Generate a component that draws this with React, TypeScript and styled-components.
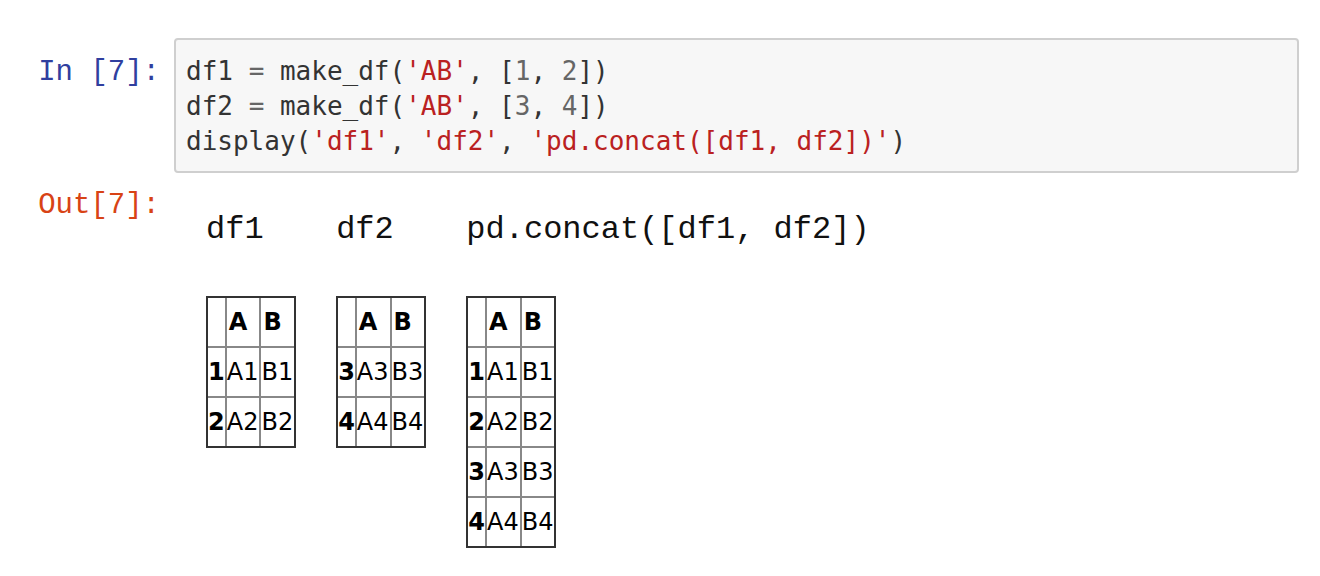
import styled, { createGlobalStyle } from 'styled-components';

const GlobalStyle = createGlobalStyle`
  body {
    margin: 0;
    background: #fff;
  }
`;

const Notebook = styled.div`
  padding: 38px 21px 0 0;
`;

const Cell = styled.div`
  display: flex;
  align-items: flex-start;
`;

const Prompt = styled.div<{ $out?: boolean }>`
  width: 174px;
  flex: none;
  box-sizing: border-box;
  padding: ${(p) => (p.$out ? '16px' : '18px')} 14px 0 0;
  text-align: right;
  font-family: 'Liberation Mono', monospace;
  font-size: 29px;
  line-height: 34px;
  color: ${(p) => (p.$out ? '#D84315' : '#303F9F')};
  white-space: pre;
`;

const CodeBox = styled.pre`
  flex: 1;
  margin: 0;
  height: 135px;
  box-sizing: border-box;
  padding: 14px 10px;
  background: #f7f7f7;
  border: 2px solid #cfcfcf;
  border-radius: 4px;
  font-family: 'DejaVu Sans Mono', monospace;
  font-size: 26px;
  line-height: 35px;
  color: #333;
`;

const Str = styled.span`
  color: #ba2121;
`;

const Op = styled.span`
  color: #666;
`;

const OutputArea = styled.div`
  display: flex;
  align-items: flex-start;
  margin-left: 12px;
  padding-top: 19px;
`;

const Block = styled.div`
  padding: 20px;
`;

const Label = styled.p`
  margin: 0 0 48px;
  font-family: 'Liberation Mono', 'Courier New', monospace;
  font-size: 32px;
  line-height: 36px;
  color: #111;
  white-space: pre;
`;

const Table = styled.table`
  border: 2px solid #333;
  border-spacing: 0;
  font-family: 'DejaVu Sans', sans-serif;
  font-size: 24px;
  color: #000;

  th,
  td {
    height: 48px;
    padding: 0;
    text-align: left;
    vertical-align: middle;
    border-left: 2px solid #888;
    border-top: 2px solid #888;
  }

  td {
    padding-right: 1px;
  }

  th:first-child,
  td:first-child {
    border-left: none;
  }

  thead tr:first-child th {
    border-top: none;
  }

  th {
    font-weight: 700;
  }
`;

const HeadCell = styled.th`
  padding: 0 1px 0 2px !important;
`;

type Frame = { name: string; rows: number[] };

const frames: Frame[] = [
  { name: 'df1', rows: [1, 2] },
  { name: 'df2', rows: [3, 4] },
  { name: 'pd.concat([df1, df2])', rows: [1, 2, 3, 4] },
];

const DataFrame = ({ rows }: { rows: number[] }) => (
  <Table>
    <thead>
      <tr>
        <th></th>
        <HeadCell>A</HeadCell>
        <HeadCell>B</HeadCell>
      </tr>
    </thead>
    <tbody>
      {rows.map((r) => (
        <tr key={r}>
          <th>{r}</th>
          <td>A{r}</td>
          <td>B{r}</td>
        </tr>
      ))}
    </tbody>
  </Table>
);

export default function App() {
  return (
    <>
      <GlobalStyle />
      <Notebook>
        <Cell>
          <Prompt>In [7]:</Prompt>
          <CodeBox>
            df1 <Op>=</Op> make_df(<Str>'AB'</Str>, [<Op>1</Op>, <Op>2</Op>]){'\n'}
            df2 <Op>=</Op> make_df(<Str>'AB'</Str>, [<Op>3</Op>, <Op>4</Op>]){'\n'}
            display(<Str>'df1'</Str>, <Str>'df2'</Str>, <Str>'pd.concat([df1, df2])'</Str>)
          </CodeBox>
        </Cell>
        <Cell>
          <Prompt $out>Out[7]:</Prompt>
          <OutputArea>
            {frames.map((f) => (
              <Block key={f.name}>
                <Label>{f.name}</Label>
                <DataFrame rows={f.rows} />
              </Block>
            ))}
          </OutputArea>
        </Cell>
      </Notebook>
    </>
  );
}
